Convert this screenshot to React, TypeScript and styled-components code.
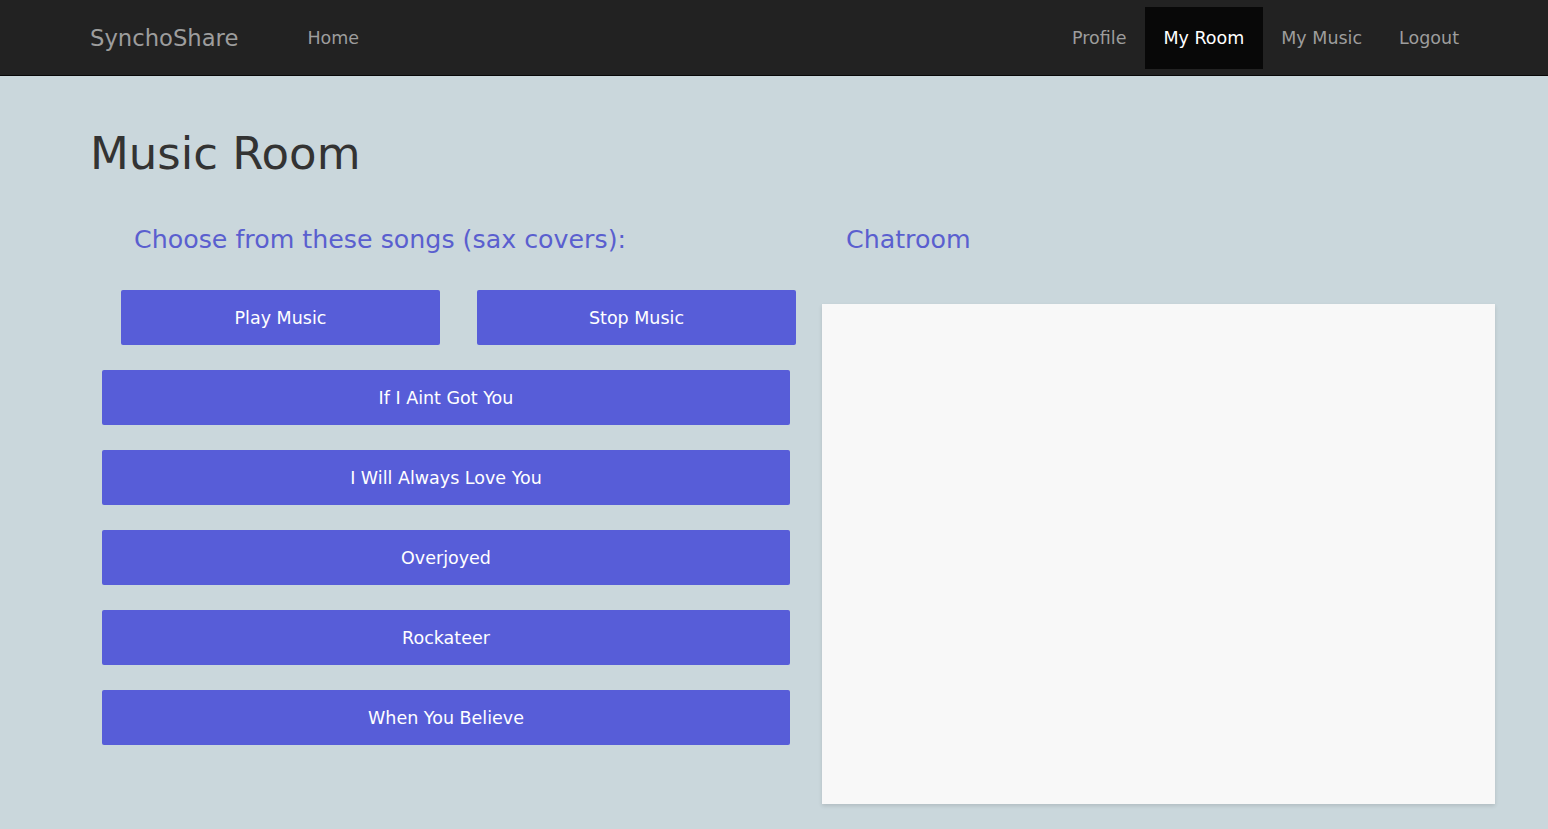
import React from 'react';
import styled, { createGlobalStyle } from 'styled-components';

const GlobalStyle = createGlobalStyle`
  html, body {
    margin: 0;
    padding: 0;
    background: #cad7dc;
    font-family: "DejaVu Sans", Verdana, sans-serif;
  }
`;

// Navbar
const NavBar = styled.nav`
  height: 75px;
  background: #222222;
  border-bottom: 1px solid #080808;
  display: flex;
  align-items: center;
  justify-content: space-between;
  padding: 0 70px 0 90px;
`;

const NavGroup = styled.div`
  display: flex;
  align-items: center;
`;

const Brand = styled.a`
  font-size: 22.7px;
  color: #9d9d9d;
  margin-right: 51px;
  text-decoration: none;
`;

const NavLink = styled.a<{ $active?: boolean }>`
  display: flex;
  align-items: center;
  height: 62px;
  padding: 0 19px 0 18px;
  font-size: 17.5px;
  color: ${p => (p.$active ? '#ffffff' : '#9d9d9d')};
  background: ${p => (p.$active ? '#080808' : 'transparent')};
  text-decoration: none;
`;

// Page body
const Page = styled.main`
  padding: 0 53px 24px 90px;
`;

const Title = styled.h1`
  margin: 0;
  padding-top: 52px;
  font-size: 45px;
  font-weight: normal;
  line-height: 52px;
  color: #333333;
`;

const Columns = styled.div`
  display: grid;
  grid-template-columns: 716px 673px;
  column-gap: 16px;
  margin-top: 45px;
`;

const Column = styled.section`
  display: flex;
  flex-direction: column;
`;

const SectionHeading = styled.h3<{ $indent: number }>`
  margin: 0 0 0 ${p => p.$indent}px;
  font-size: 25.3px;
  font-weight: normal;
  line-height: 30px;
  color: #5a5fcf;
`;

const ControlRow = styled.div`
  display: flex;
  gap: 37px;
  margin: 35px 0 0 31px;
`;

const SongList = styled.div`
  display: flex;
  flex-direction: column;
  gap: 25px;
  margin: 25px 0 0 12px;
  width: 688px;
`;

const PurpleButton = styled.button<{ $width?: number }>`
  width: ${p => (p.$width ? `${p.$width}px` : '100%')};
  height: 55px;
  border: none;
  border-radius: 2px;
  background: #575dd8;
  color: #ffffff;
  font-family: "DejaVu Sans", Verdana, sans-serif;
  font-size: 17.5px;
  cursor: pointer;
`;

const ChatPanel = styled.div`
  margin-top: 49px;
  height: 500px;
  background: #f8f8f8;
  box-shadow: 0 2px 4px rgba(0, 0, 0, 0.12);
`;

const songs = [
  'If I Aint Got You',
  'I Will Always Love You',
  'Overjoyed',
  'Rockateer',
  'When You Believe',
];

const App: React.FC = () => {
  return (
    <>
      <GlobalStyle />
      <NavBar>
        <NavGroup>
          <Brand>SynchoShare</Brand>
          <NavLink>Home</NavLink>
        </NavGroup>
        <NavGroup>
          <NavLink>Profile</NavLink>
          <NavLink $active>My Room</NavLink>
          <NavLink>My Music</NavLink>
          <NavLink>Logout</NavLink>
        </NavGroup>
      </NavBar>

      <Page>
        <Title>Music Room</Title>
        <Columns>
          <Column>
            <SectionHeading $indent={44}>Choose from these songs (sax covers):</SectionHeading>
            <ControlRow>
              <PurpleButton $width={319}>Play Music</PurpleButton>
              <PurpleButton $width={319}>Stop Music</PurpleButton>
            </ControlRow>
            <SongList>
              {songs.map(song => (
                <PurpleButton key={song}>{song}</PurpleButton>
              ))}
            </SongList>
          </Column>
          <Column>
            <SectionHeading $indent={24}>Chatroom</SectionHeading>
            <ChatPanel />
          </Column>
        </Columns>
      </Page>
    </>
  );
};

export default App;
